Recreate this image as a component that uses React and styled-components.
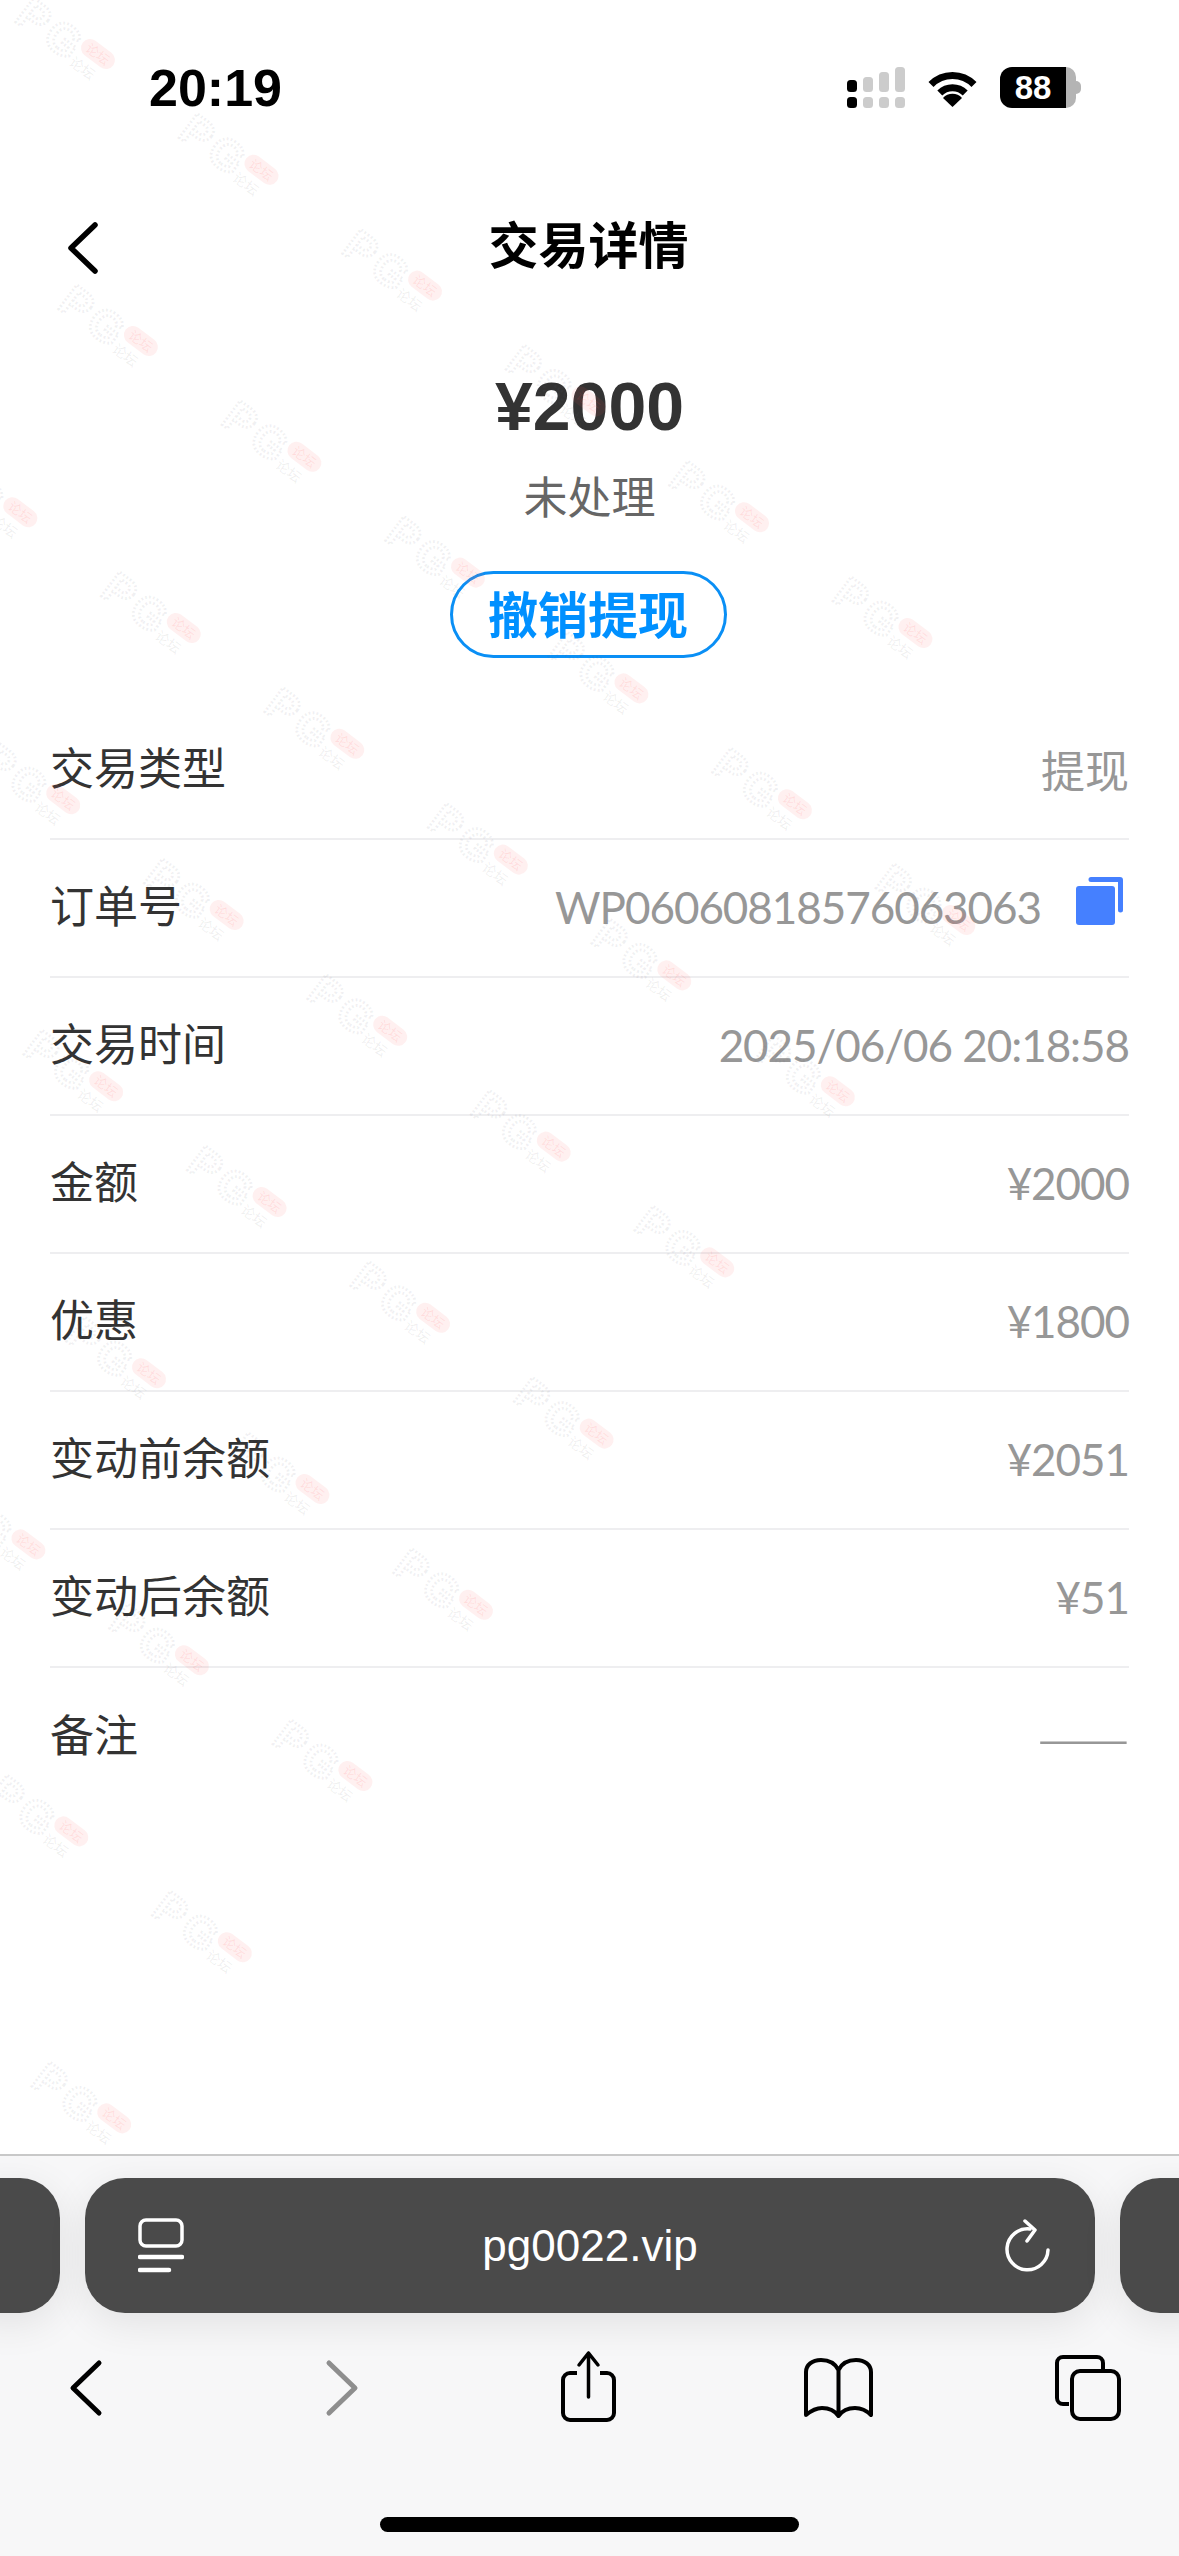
import React from "react";
import styled, { createGlobalStyle } from "styled-components";

const rows = [
  { label: "交易类型", value: "提现", plain: true },
  { label: "订单号", value: "WP06060818576063063", copy: true },
  { label: "交易时间", value: "2025/06/06 20:18:58" },
  { label: "金额", value: "¥2000" },
  { label: "优惠", value: "¥1800" },
  { label: "变动前余额", value: "¥2051" },
  { label: "变动后余额", value: "¥51" },
  { label: "备注", value: "——", plain: true, dash: true },
];

// the forum watermark sits on a slanted lattice, each line has its own first and last mark
const markLines = [
  [0, 5],
  [0, 5],
  [-1, 4],
  [-1, 3],
  [-1, 2],
  [-1, 1],
  [-2, 0],
  [-2, -1],
  [-2, -2],
];
const marks = [];
markLines.forEach(([first, last], j) => {
  for (let i = first; i <= last; i++) {
    marks.push({ x: 98 + i * 163.5 + j * 42.9, y: 54 + i * 115.8 + j * 287 });
  }
});

export default function App() {
  return (
    <Page>
      <GlobalStyle />
      <StatusBar>
        <Clock>20:19</Clock>
        <StatusIcons>
          <svg width="58" height="41" viewBox="0 0 58 41">
            <rect x="0" y="13" width="10" height="12" rx="3.5" fill="#000" />
            <rect x="16" y="10" width="10" height="15" rx="3.5" fill="#ccc" />
            <rect x="32" y="5" width="10" height="20" rx="3.5" fill="#ccc" />
            <rect x="48" y="0" width="10" height="25" rx="3.5" fill="#ccc" />
            <rect x="0" y="30" width="10" height="11" rx="3.5" fill="#000" />
            <rect x="16" y="30" width="10" height="11" rx="3.5" fill="#ccc" />
            <rect x="32" y="30" width="10" height="11" rx="3.5" fill="#ccc" />
            <rect x="48" y="30" width="10" height="11" rx="3.5" fill="#ccc" />
          </svg>
          <svg width="51" height="38" viewBox="0 0 51 38">
            <path d="M4 15.5A30 30 0 0 1 47 15.5" fill="none" stroke="#000" strokeWidth="7" />
            <path d="M12.8 24A18 18 0 0 1 38.2 24" fill="none" stroke="#000" strokeWidth="7" />
            <path d="M25.5 38L16 29A13 13 0 0 1 35 29Z" fill="#000" />
          </svg>
          <Battery>
            <BatteryBody>88</BatteryBody>
            <BatteryEdge />
            <BatteryNub />
          </Battery>
        </StatusIcons>
      </StatusBar>

      <NavBar>
        <BackButton>
          <svg width="36" height="56" viewBox="0 0 36 56">
            <path d="M30 5L6 28L30 51" fill="none" stroke="#000" strokeWidth="5.5" strokeLinecap="round" strokeLinejoin="round" />
          </svg>
        </BackButton>
        <Title>交易详情</Title>
      </NavBar>

      <Summary>
        <Amount>¥2000</Amount>
        <Status>未处理</Status>
        <CancelButton>撤销提现</CancelButton>
      </Summary>

      <List>
        {rows.map((row) => (
          <Row key={row.label}>
            <Label>{row.label}</Label>
            <Value $plain={row.plain} $dash={row.dash}>
              {row.value}
              {row.copy && (
                <CopyIcon width="47" height="48" viewBox="0 0 47 48">
                  <path d="M15 0H44a3 3 0 0 1 3 3V33a2.5 2.5 0 0 1-5 0V5H15a2.5 2.5 0 0 1 0-5Z" fill="#4580ff" />
                  <rect x="0" y="9" width="39" height="39" rx="3" fill="#4580ff" />
                </CopyIcon>
              )}
            </Value>
          </Row>
        ))}
      </List>

      <Watermark width="1179" height="2154" viewBox="0 0 1179 2154">
        {marks.map((m) => (
          <g key={`${m.x}-${m.y}`} transform={`translate(${m.x} ${m.y}) rotate(37)`}>
            <text x="-88" y="24" letterSpacing="5" fontFamily="Liberation Sans, sans-serif" fontSize="44" fontWeight="700" fill="none" stroke="#667" strokeOpacity="0.09" strokeWidth="3" strokeDasharray="2 2">PG</text>
            <rect x="-19" y="-9" width="38" height="18" rx="9" fill="#f55" fillOpacity="0.09" />
            <text x="-13" y="5" fontFamily="Noto Sans CJK SC, sans-serif" fontSize="13" fill="#f55" fillOpacity="0.12">论坛</text>
            <text x="-18" y="26" fontFamily="Noto Sans CJK SC, sans-serif" fontSize="14" fill="#666" fillOpacity="0.1">论坛</text>
          </g>
        ))}
      </Watermark>

      <Toolbar>
        <TabStrip>
          <TabPill />
          <TabPill $active>
            <svg width="46" height="55" viewBox="0 0 46 55">
              <rect x="2" y="2" width="42" height="26" rx="6" fill="none" stroke="#fff" strokeWidth="3.5" />
              <path d="M2 39H44M2 52H31" stroke="#fff" strokeWidth="4.5" strokeLinecap="round" />
            </svg>
            <Address>pg0022.vip</Address>
            <svg width="46" height="54" viewBox="0 0 46 54">
              <path d="M26 10A20.5 20.5 0 1 0 44 31" fill="none" stroke="#fff" strokeWidth="3.5" strokeLinecap="round" />
              <path d="M21 2L31 11L23 22" fill="none" stroke="#fff" strokeWidth="3.5" strokeLinecap="round" strokeLinejoin="round" />
            </svg>
          </TabPill>
          <TabPill />
        </TabStrip>

        <ToolIcons>
          <svg width="100" height="90" viewBox="0 0 100 90">
            <path d="M61 23L35 48L61 73" fill="none" stroke="#000" strokeWidth="5" strokeLinecap="round" strokeLinejoin="round" />
          </svg>
          <svg width="100" height="90" viewBox="0 0 100 90">
            <path d="M41 23L67 48L41 73" fill="none" stroke="#8e8e8e" strokeWidth="5" strokeLinecap="round" strokeLinejoin="round" />
          </svg>
          <svg width="100" height="90" viewBox="0 0 100 90">
            <path d="M39 33H32a7 7 0 0 0-7 7V73a7 7 0 0 0 7 7H69a7 7 0 0 0 7-7V40a7 7 0 0 0-7-7H62" fill="none" stroke="#000" strokeWidth="4" />
            <path d="M50.5 13V57M41 25L50.5 13L60 25" fill="none" stroke="#000" strokeWidth="3.5" strokeLinecap="round" strokeLinejoin="round" />
          </svg>
          <svg width="100" height="90" viewBox="0 0 100 90">
            <path d="M50.5 30C47 23 40 20 33 20C24 20 18 25 18 32V75C24 70 29 68 34 68C41 68 47 71 50.5 76C54 71 60 68 67 68C72 68 78 70 83 75V32C83 25 77 20 68 20C61 20 54 23 50.5 30ZM50.5 30V76" fill="none" stroke="#000" strokeWidth="4" strokeLinejoin="round" />
          </svg>
          <svg width="100" height="90" viewBox="0 0 100 90">
            <path d="M31 64H25a6 6 0 0 1-6-6V23a6 6 0 0 1 6-6H59a6 6 0 0 1 6 6V30" fill="none" stroke="#000" strokeWidth="4" />
            <rect x="34" y="31" width="47" height="48" rx="8" fill="none" stroke="#000" strokeWidth="4" />
          </svg>
        </ToolIcons>
        <HomeBar />
      </Toolbar>
    </Page>
  );
}

const GlobalStyle = createGlobalStyle`
  body {
    margin: 0;
    background: #fff;
    font-family: "Noto Sans CJK SC", sans-serif;
  }
`;

const Page = styled.div`
  position: relative;
  width: 1179px;
  height: 2556px;
  display: flex;
  flex-direction: column;
  overflow: hidden;
  background: #fff;
`;

const StatusBar = styled.div`
  height: 190px;
  box-sizing: border-box;
  padding: 58px 98px 0 149px;
  display: flex;
  justify-content: space-between;
  align-items: flex-start;
`;

const Clock = styled.div`
  font-family: "Liberation Sans", sans-serif;
  font-size: 52px;
  line-height: 60px;
  font-weight: 700;
  color: #000;
`;

const StatusIcons = styled.div`
  display: flex;
  align-items: center;
  gap: 22px;
  margin-top: 9px;
`;

const Battery = styled.div`
  display: flex;
  align-items: center;
`;

const BatteryBody = styled.div`
  width: 66px;
  height: 41px;
  background: #000;
  border-radius: 12px 0 0 12px;
  color: #fff;
  font-family: "Liberation Sans", sans-serif;
  font-size: 33px;
  line-height: 41px;
  font-weight: 700;
  text-align: center;
`;

const BatteryEdge = styled.div`
  width: 10px;
  height: 41px;
  background: #b4b4b4;
  border-radius: 0 10px 10px 0;
`;

const BatteryNub = styled.div`
  width: 5px;
  height: 13px;
  background: #b4b4b4;
  border-radius: 0 5px 5px 0;
`;

const NavBar = styled.div`
  position: relative;
  height: 116px;
  display: flex;
  align-items: center;
  justify-content: center;
`;

const BackButton = styled.div`
  position: absolute;
  left: 65px;
  top: 30px;
  line-height: 0;
`;

const Title = styled.div`
  font-size: 50px;
  font-weight: 700;
  color: #000;
  line-height: 70px;
  margin-top: -12px;
  margin-right: 2px;
`;

const Summary = styled.div`
  padding-top: 60px;
  display: flex;
  flex-direction: column;
  align-items: center;
`;

const Amount = styled.div`
  font-family: "Liberation Sans", sans-serif;
  font-size: 68px;
  font-weight: 700;
  line-height: 80px;
  color: #333;
`;

const Status = styled.div`
  margin-top: 19px;
  margin-bottom: 3px;
  font-size: 44px;
  line-height: 60px;
  color: #666;
`;

const CancelButton = styled.div`
  margin-top: 43px;
  margin-right: 3px;
  box-sizing: border-box;
  width: 277px;
  height: 87px;
  padding-bottom: 6px;
  border: 3px solid #0a8ff5;
  border-radius: 44px;
  display: flex;
  align-items: center;
  justify-content: center;
  font-size: 50px;
  font-weight: 600;
  color: #0090ff;
`;

const List = styled.div`
  margin: 44px 50px 0;
`;

const Row = styled.div`
  box-sizing: border-box;
  height: 138px;
  display: flex;
  align-items: center;
  justify-content: space-between;
  border-bottom: 2px solid #eeeef0;
  &:last-child {
    border-bottom: none;
  }
`;

const Label = styled.div`
  font-size: 44px;
  color: #333;
  margin-bottom: 8px;
`;

const Value = styled.div`
  display: flex;
  align-items: center;
  margin-bottom: ${(p) => (p.$dash ? "7px" : "3px")};
  font-family: ${(p) => (p.$dash ? '"Noto Sans CJK SC"' : 'Lato, "Noto Sans CJK SC"')}, sans-serif;
  font-size: ${(p) => (p.$dash ? "55px" : "44px")};
  font-weight: ${(p) => (p.$dash ? 300 : 400)};
  letter-spacing: ${(p) => (p.$plain ? "0" : "-1.05px")};
  color: #979797;
`;

const CopyIcon = styled.svg`
  margin-left: 35px;
  margin-right: 6px;
  margin-top: -11px;
`;

const Watermark = styled.svg`
  position: absolute;
  top: 0;
  left: 0;
  pointer-events: none;
`;

const Toolbar = styled.div`
  margin-top: auto;
  box-sizing: border-box;
  height: 402px;
  border-top: 2px solid #c8c8c8;
  background: #f7f7f8;
  display: flex;
  flex-direction: column;
  align-items: center;
  overflow: hidden;
  position: relative;
`;

const TabStrip = styled.div`
  margin-top: 22px;
  display: grid;
  grid-template-columns: 100px 1010px 100px;
  gap: 25px;
  justify-content: center;
  width: 100%;
`;

const TabPill = styled.div`
  height: 135px;
  box-sizing: border-box;
  padding: 0 44px 0 53px;
  border-radius: 40px;
  background: #4a4a4a;
  box-shadow: 0 10px 40px rgba(0, 0, 0, 0.09);
  display: flex;
  align-items: center;
  justify-content: space-between;
`;

const Address = styled.div`
  font-family: "Liberation Sans", sans-serif;
  font-size: 44px;
  color: #fff;
  margin-right: 8px;
`;

const ToolIcons = styled.div`
  margin-top: 27px;
  padding-right: 4px;
  box-sizing: border-box;
  display: grid;
  grid-template-columns: repeat(5, 250px);
  justify-content: center;
  justify-items: center;
  width: 100%;
`;

const HomeBar = styled.div`
  position: absolute;
  left: 380px;
  bottom: 24px;
  width: 419px;
  height: 15px;
  border-radius: 8px;
  background: #000;
`;
